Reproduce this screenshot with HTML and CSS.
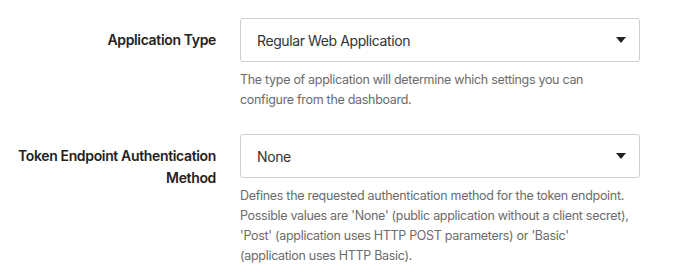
FILE: index.html
```html
<!DOCTYPE html>
<html lang="en">
<head>
    <meta charset="UTF-8">
    <title>Application Settings</title>
    <link rel="stylesheet" href="styles.css">
</head>
<body>
    <form class="settings-form">
        <div class="form-row">
            <label class="form-label" for="appType">Application Type</label>
            <div class="form-control">
                <div class="select-box" id="appType">
                    <span class="select-value">Regular Web Application</span>
                    <span class="select-caret"></span>
                </div>
                <p class="help-text">The type of application will determine which settings you can configure from the dashboard.</p>
            </div>
        </div>
        <div class="form-row">
            <label class="form-label" for="authMethod">Token Endpoint Authentication Method</label>
            <div class="form-control">
                <div class="select-box" id="authMethod">
                    <span class="select-value">None</span>
                    <span class="select-caret"></span>
                </div>
                <p class="help-text">Defines the requested authentication method for the token endpoint. Possible values are 'None' (public application without a client secret), 'Post' (application uses HTTP POST parameters) or 'Basic' <span class="nowrap">(application uses HTTP Basic).</span></p>
            </div>
        </div>
    </form>
</body>
</html>
```

FILE: styles.css
```css
* {
    margin: 0;
    padding: 0;
    box-sizing: border-box;
}

body {
    font-family: Inter, 'Noto Sans', sans-serif;
    background: #fff;
    color: #333;
}

.settings-form {
    padding-top: 18px;
    display: flex;
    flex-direction: column;
    gap: 24px;
}

.form-row {
    display: grid;
    grid-template-columns: 216px 400px;
    column-gap: 24px;
}

.form-label {
    text-align: right;
    font-size: 14px;
    font-weight: 600;
    letter-spacing: -0.35px;
    line-height: 22px;
    padding-top: 11px;
    color: #222;
}

.select-box {
    height: 44px;
    border: 1px solid #d0d0d0;
    border-radius: 3px;
    display: flex;
    align-items: center;
    justify-content: space-between;
    padding: 0 13px 0 16px;
}

.select-value {
    font-size: 14px;
    letter-spacing: -0.4px;
    color: #333;
}

.select-caret {
    width: 0;
    height: 0;
    border-left: 5px solid transparent;
    border-right: 5px solid transparent;
    border-top: 6px solid #222;
}

.help-text {
    margin-top: 8px;
    font-size: 12.5px;
    letter-spacing: -0.3px;
    line-height: 20px;
    color: #6b6b6b;
}

.nowrap {
    white-space: nowrap;
}
```
